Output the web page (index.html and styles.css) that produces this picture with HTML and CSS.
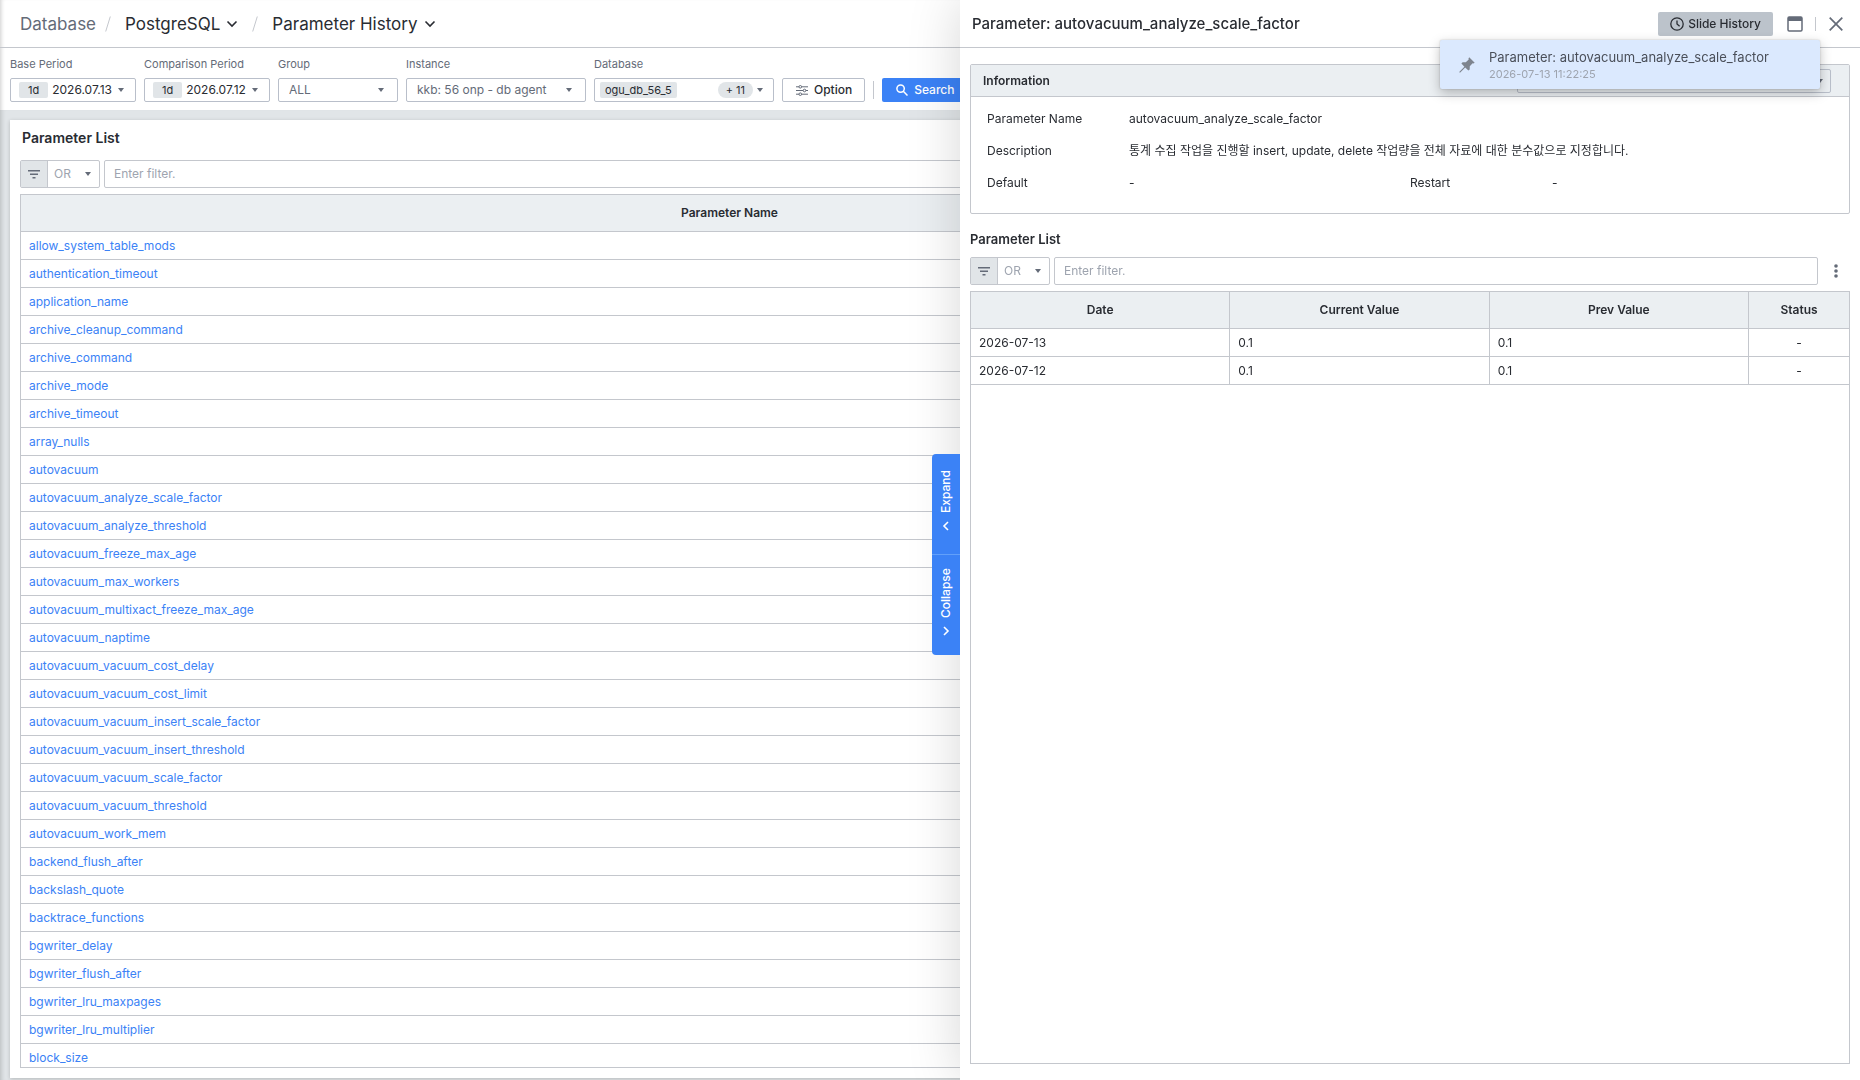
FILE: index.html
```html
<!DOCTYPE html>
<html lang="ko">
<head>
    <meta charset="UTF-8">
    <meta name="viewport" content="width=device-width, initial-scale=1.0">
    <title>Parameter History</title>
    <link rel="stylesheet" href="styles.css">
</head>
<body>
    <svg class="sprite" aria-hidden="true">
        <symbol id="icon-caret" viewBox="0 0 6 4"><path d="M0 0h6L3 4z"/></symbol>
        <symbol id="icon-chevron" viewBox="0 0 12 8"><path d="M1.5 1.5L6 6l4.5-4.5" fill="none" stroke="currentColor" stroke-width="1.6"/></symbol>
        <symbol id="icon-filter" viewBox="0 0 12 9"><path d="M0 0h12v1.4H0zM2 3.5h8v1.4H2zM4.5 7h3v1.4h-3z"/></symbol>
    </svg>

    <main class="page">
        <nav class="breadcrumb" aria-label="Breadcrumb">
            <span class="crumb-root">Database</span>
            <svg class="slash" viewBox="0 0 6 16"><path d="M5.3 0.5L0.7 15.5"/></svg>
            <button class="crumb" type="button">PostgreSQL <svg class="chevron"><use href="#icon-chevron"/></svg></button>
            <svg class="slash" viewBox="0 0 6 16"><path d="M5.3 0.5L0.7 15.5"/></svg>
            <button class="crumb" type="button">Parameter History <svg class="chevron"><use href="#icon-chevron"/></svg></button>
        </nav>

        <form class="toolbar">
            <div class="field field-period">
                <label for="base">Base Period</label>
                <button class="control period" id="base" type="button"><span class="tag">1d</span>2026.07.13<svg class="caret"><use href="#icon-caret"/></svg></button>
            </div>
            <div class="field field-period">
                <label for="comparison">Comparison Period</label>
                <button class="control period" id="comparison" type="button"><span class="tag">1d</span>2026.07.12<svg class="caret"><use href="#icon-caret"/></svg></button>
            </div>
            <div class="field field-group">
                <label for="group">Group</label>
                <div class="select">
                    <select class="control" id="group"><option>ALL</option></select>
                    <svg class="caret"><use href="#icon-caret"/></svg>
                </div>
            </div>
            <div class="field field-wide">
                <label for="instance">Instance</label>
                <div class="select">
                    <select class="control" id="instance"><option>kkb: 56 onp - db agent</option></select>
                    <svg class="caret"><use href="#icon-caret"/></svg>
                </div>
            </div>
            <div class="field field-wide">
                <label for="database">Database</label>
                <button class="control multi" id="database" type="button"><span class="tag">ogu_db_56_5</span><span class="count">+ 11</span><svg class="caret"><use href="#icon-caret"/></svg></button>
            </div>
            <button class="control option" type="button">
                <svg class="option-icon" viewBox="0 0 12 11"><path d="M0 1.8h3M5.6 1.8H12M0 5.5h7.2M9.8 5.5H12M0 9.2h3M5.6 9.2H12"/><circle cx="4.3" cy="1.8" r="1.3"/><circle cx="8.5" cy="5.5" r="1.3"/><circle cx="4.3" cy="9.2" r="1.3"/></svg>
                Option
            </button>
            <span class="divider"></span>
            <button class="search" type="submit">
                <svg class="search-icon" viewBox="0 0 12 12"><circle cx="4.6" cy="4.6" r="3.7"/><path d="M7.3 7.3l4.2 4.2"/></svg>
                Search
            </button>
        </form>

        <div class="content">
            <section class="panel">
                <h2>Parameter List</h2>
                <div class="filter">
                    <div class="filter-mode">
                        <span class="filter-icon"><svg><use href="#icon-filter"/></svg></span>
                        <div class="select">
                            <select aria-label="Filter operator"><option>OR</option></select>
                            <svg class="caret"><use href="#icon-caret"/></svg>
                        </div>
                    </div>
                    <input class="filter-input" type="text" placeholder="Enter filter." aria-label="Filter parameters">
                </div>
                <div class="table-wrap">
                    <table>
                        <colgroup><col class="col-name"><col></colgroup>
                        <thead>
                            <tr><th>Parameter Name</th><th></th></tr>
                        </thead>
                        <tbody>
                            <tr><td><a href="#">allow_system_table_mods</a></td><td></td></tr>
                            <tr><td><a href="#">authentication_timeout</a></td><td></td></tr>
                            <tr><td><a href="#">application_name</a></td><td></td></tr>
                            <tr><td><a href="#">archive_cleanup_command</a></td><td></td></tr>
                            <tr><td><a href="#">archive_command</a></td><td></td></tr>
                            <tr><td><a href="#">archive_mode</a></td><td></td></tr>
                            <tr><td><a href="#">archive_timeout</a></td><td></td></tr>
                            <tr><td><a href="#">array_nulls</a></td><td></td></tr>
                            <tr><td><a href="#">autovacuum</a></td><td></td></tr>
                            <tr><td><a href="#">autovacuum_analyze_scale_factor</a></td><td></td></tr>
                            <tr><td><a href="#">autovacuum_analyze_threshold</a></td><td></td></tr>
                            <tr><td><a href="#">autovacuum_freeze_max_age</a></td><td></td></tr>
                            <tr><td><a href="#">autovacuum_max_workers</a></td><td></td></tr>
                            <tr><td><a href="#">autovacuum_multixact_freeze_max_age</a></td><td></td></tr>
                            <tr><td><a href="#">autovacuum_naptime</a></td><td></td></tr>
                            <tr><td><a href="#">autovacuum_vacuum_cost_delay</a></td><td></td></tr>
                            <tr><td><a href="#">autovacuum_vacuum_cost_limit</a></td><td></td></tr>
                            <tr><td><a href="#">autovacuum_vacuum_insert_scale_factor</a></td><td></td></tr>
                            <tr><td><a href="#">autovacuum_vacuum_insert_threshold</a></td><td></td></tr>
                            <tr><td><a href="#">autovacuum_vacuum_scale_factor</a></td><td></td></tr>
                            <tr><td><a href="#">autovacuum_vacuum_threshold</a></td><td></td></tr>
                            <tr><td><a href="#">autovacuum_work_mem</a></td><td></td></tr>
                            <tr><td><a href="#">backend_flush_after</a></td><td></td></tr>
                            <tr><td><a href="#">backslash_quote</a></td><td></td></tr>
                            <tr><td><a href="#">backtrace_functions</a></td><td></td></tr>
                            <tr><td><a href="#">bgwriter_delay</a></td><td></td></tr>
                            <tr><td><a href="#">bgwriter_flush_after</a></td><td></td></tr>
                            <tr><td><a href="#">bgwriter_lru_maxpages</a></td><td></td></tr>
                            <tr><td><a href="#">bgwriter_lru_multiplier</a></td><td></td></tr>
                            <tr><td><a href="#">block_size</a></td><td></td></tr>
                        </tbody>
                    </table>
                </div>
            </section>
        </div>
    </main>

    <aside class="drawer">
        <div class="drawer-tabs">
            <button type="button"><svg viewBox="0 0 8 10"><path d="M2 1l4 4-4 4"/></svg>Expand</button>
            <button type="button"><svg viewBox="0 0 8 10"><path d="M6 1L2 5l4 4"/></svg>Collapse</button>
        </div>

        <header class="drawer-header">
            <h1>Parameter: autovacuum_analyze_scale_factor</h1>
            <button class="history" type="button">
                <svg class="clock" viewBox="0 0 14 14"><circle cx="7" cy="7" r="6.2"/><path d="M7 3.5V7l2.6 2.2"/></svg>
                Slide History
            </button>
            <button class="icon-button" type="button" aria-label="Open in window">
                <svg class="window-icon" viewBox="0 0 16 16"><rect x="1" y="1" width="14" height="14" rx="1.2" fill="none" stroke="currentColor" stroke-width="1.5"/><path d="M1 1h14v4H1z"/></svg>
            </button>
            <span class="divider divider-small"></span>
            <button class="icon-button" type="button" aria-label="Close">
                <svg class="close-icon" viewBox="0 0 14 14"><path d="M0.7 0.7l12.6 12.6M13.3 0.7L0.7 13.3" stroke="currentColor" stroke-width="1.7"/></svg>
            </button>
            <div class="popover">
                <svg class="pin" viewBox="0 0 16 16"><path d="M10.2 0.3L15.7 5.8 14.3 6.5 13.6 6.2 10.8 9.2 10.7 12.4 9.4 13.6 6.2 10.5 1 15.8 0.2 15 5.4 9.7 2.4 6.6 3.6 5.3 6.8 5.2 9.7 2.4 9.5 1.6z"/></svg>
                <div>
                    <div class="popover-title">Parameter: autovacuum_analyze_scale_factor</div>
                    <div class="popover-time">2026-07-13 11:22:25</div>
                </div>
            </div>
        </header>

        <div class="drawer-body">
            <section class="info">
                <div class="info-head">
                    <h3>Information</h3>
                    <div class="select">
                        <select class="control" aria-label="Compared item"><option></option></select>
                        <svg class="caret"><use href="#icon-caret"/></svg>
                    </div>
                </div>
                <dl class="info-list">
                    <div class="info-row full"><dt>Parameter Name</dt><dd>autovacuum_analyze_scale_factor</dd></div>
                    <div class="info-row full"><dt>Description</dt><dd>통계 수집 작업을 진행할 insert, update, delete 작업량을 전체 자료에 대한 분수값으로 지정합니다.</dd></div>
                    <div class="info-row"><dt>Default</dt><dd>-</dd></div>
                    <div class="info-row"><dt>Restart</dt><dd>-</dd></div>
                </dl>
            </section>

            <h3>Parameter List</h3>
            <div class="filter">
                <div class="filter-mode">
                    <span class="filter-icon"><svg><use href="#icon-filter"/></svg></span>
                    <div class="select">
                        <select aria-label="Filter operator"><option>OR</option></select>
                        <svg class="caret"><use href="#icon-caret"/></svg>
                    </div>
                </div>
                <input class="filter-input" type="text" placeholder="Enter filter." aria-label="Filter history">
                <button class="more" type="button" aria-label="More">
                    <svg viewBox="0 0 4 14"><circle cx="2" cy="2" r="1.8"/><circle cx="2" cy="7" r="1.8"/><circle cx="2" cy="12" r="1.8"/></svg>
                </button>
            </div>
            <div class="table-wrap">
                <table>
                    <colgroup><col><col><col><col class="col-status"></colgroup>
                    <thead>
                        <tr><th>Date</th><th>Current Value</th><th>Prev Value</th><th>Status</th></tr>
                    </thead>
                    <tbody>
                        <tr><td>2026-07-13</td><td>0.1</td><td>0.1</td><td class="center">-</td></tr>
                        <tr><td>2026-07-12</td><td>0.1</td><td>0.1</td><td class="center">-</td></tr>
                    </tbody>
                </table>
            </div>
        </div>
    </aside>
</body>
</html>
```
FILE: styles.css
```css
:root {
    --text: #292c32;
    --text-sub: #646b78;
    --text-muted: #9ea4af;
    --border: #c4c7cd;
    --control-border: #b9bfca;
    --head: #ebeff2;
    --chip: #e1e5e8;
    --blue: #3b82f6;
}

* {
    box-sizing: border-box;
    margin: 0;
    padding: 0;
}

body {
    height: 100vh;
    overflow: hidden;
    color: var(--text);
    background: #fff;
    font: 12px/16px Inter, "Noto Sans CJK KR", sans-serif;
}

button, input, select {
    font: inherit;
    color: inherit;
    border: 0;
    background: none;
}

button {
    display: flex;
    align-items: center;
    white-space: nowrap;
    cursor: pointer;
}

svg {
    flex: none;
    fill: currentColor;
}

a {
    color: var(--blue);
    text-decoration: none;
}

.sprite {
    display: none;
}

.page {
    display: flex;
    flex-direction: column;
    height: 100%;
    box-shadow: inset 4px 0 4px -3px rgba(0, 0, 0, 0.2);
}

/* breadcrumb */
.breadcrumb {
    display: flex;
    align-items: center;
    height: 48px;
    padding-left: 20px;
    border-bottom: 1px solid var(--border);
    font-size: 17px;
    line-height: 24px;
}

.crumb-root {
    color: var(--text-sub);
}

.crumb {
    gap: 6px;
}

.slash {
    width: 6px;
    height: 16px;
    margin: 0 14px 0 9px;
    fill: none;
    stroke: var(--border);
}

.crumb + .slash {
    margin-left: 14px;
}

.chevron {
    width: 12px;
    height: 8px;
}

/* toolbar */
.toolbar {
    display: flex;
    align-items: flex-end;
    gap: 8px;
    height: 62px;
    padding: 0 10px 8px;
}

.field label {
    display: block;
    margin-bottom: 6px;
    font-size: 11px;
    color: var(--text-sub);
}

.field-period {
    width: 126px;
}

.field-group {
    width: 120px;
}

.field-wide {
    width: 180px;
}

.control {
    height: 24px;
    border: 1px solid var(--control-border);
    border-radius: 2px;
    background: #fff;
}

.select {
    position: relative;
    color: var(--text-sub);
}

.select select {
    width: 100%;
    padding: 0 10px;
    appearance: none;
}

.select .caret {
    position: absolute;
    top: 50%;
    right: 14px;
    margin-top: -2px;
    pointer-events: none;
}

.caret {
    width: 6px;
    height: 4px;
    color: var(--text-sub);
}

.tag {
    padding: 0 9px;
    border-radius: 2px;
    background: var(--chip);
    font-size: 11px;
}

.period {
    width: 100%;
    padding: 0 11px 0 8px;
}

.period .tag {
    margin-right: 4px;
}

.period .caret {
    margin-left: auto;
}

.multi {
    width: 100%;
    padding: 0 10px 0 5px;
}

.multi .tag {
    padding: 0 5px;
}

.count {
    margin: 0 4px 0 auto;
    padding: 0 8px;
    border-radius: 8px;
    background: var(--chip);
    font-size: 11px;
}

.option {
    gap: 6px;
    padding: 0 12px 0 13px;
    font-weight: 500;
}

.option-icon {
    width: 12px;
    height: 11px;
    fill: none;
    stroke: var(--text-sub);
}

.divider {
    width: 1px;
    height: 18px;
    margin-bottom: 3px;
    background: var(--border);
}

.search {
    gap: 6px;
    height: 24px;
    padding: 0 14px;
    border-radius: 2px;
    background: var(--blue);
    color: #fff;
    font-weight: 500;
}

.search-icon {
    width: 12px;
    height: 12px;
    fill: none;
    stroke: #fff;
    stroke-width: 1.5;
}

/* parameter panel */
.content {
    flex: 1;
    min-height: 0;
    padding: 10px 10px 2px;
    background: var(--chip);
    box-shadow: inset 5px 0 5px -4px rgba(0, 0, 0, 0.2);
}

.panel {
    display: flex;
    flex-direction: column;
    height: 100%;
    padding: 8px 10px 10px;
    background: #fff;
    box-shadow: 0 1px 4px rgba(0, 0, 0, 0.2);
}

.panel h2 {
    margin-bottom: 12px;
    padding-left: 2px;
    font-size: 14px;
    line-height: 20px;
    font-weight: 600;
}

.filter {
    display: flex;
    gap: 4px;
    height: 28px;
    margin-bottom: 6px;
}

.filter-mode {
    display: flex;
    width: 80px;
    border: 1px solid var(--border);
    border-radius: 2px;
}

.filter-icon {
    display: flex;
    align-items: center;
    justify-content: center;
    width: 27px;
    border-right: 1px solid var(--border);
    background: var(--chip);
    color: var(--text-sub);
}

.filter-icon svg {
    width: 12px;
    height: 9px;
}

.filter-mode .select {
    flex: 1;
}

.filter-mode select {
    height: 100%;
    padding: 0 6px;
    color: var(--text-muted);
}

.filter-mode .caret {
    right: 8px;
}

.filter-input {
    flex: 1;
    padding: 0 9px;
    border: 1px solid var(--border);
    border-radius: 2px;
}

.filter-input::placeholder {
    color: var(--text-muted);
}

.table-wrap {
    flex: 1;
    min-height: 0;
    overflow: hidden;
    border: 1px solid var(--border);
}

table {
    width: 100%;
    table-layout: fixed;
    border-collapse: separate;
    border-spacing: 0;
}

th, td {
    height: 28px;
    padding: 0 8px;
    border-right: 1px solid var(--border);
    border-bottom: 1px solid var(--border);
    text-align: left;
}

th {
    height: 37px;
    background: var(--head);
    font-weight: 600;
    text-align: center;
}

th:last-child, td:last-child {
    border-right: 0;
}

.col-name {
    width: 78%;
}

.col-status {
    width: 100px;
}

td.center {
    text-align: center;
}

/* slide drawer */
.drawer {
    position: fixed;
    top: 0;
    right: 0;
    bottom: 0;
    display: flex;
    flex-direction: column;
    width: 900px;
    background: #fff;
    box-shadow: 0 0 50px rgba(0, 0, 0, 0.16);
}

.drawer-tabs {
    position: absolute;
    top: 50%;
    right: 100%;
    margin-top: -86px;
    overflow: hidden;
    border-radius: 4px 0 0 4px;
}

.drawer-tabs button {
    justify-content: center;
    gap: 8px;
    width: 28px;
    height: 100px;
    padding-top: 6px;
    background: var(--blue);
    color: #fff;
    font-weight: 500;
    writing-mode: vertical-rl;
    transform: rotate(180deg);
}

.drawer-tabs button + button {
    height: 101px;
    border-bottom: 1px solid #62a0fa;
}

.drawer-tabs svg {
    width: 8px;
    height: 10px;
    fill: none;
    stroke: #fff;
    stroke-width: 1.6;
}

.drawer-header {
    position: relative;
    display: flex;
    align-items: center;
    height: 48px;
    padding: 0 17px 0 12px;
    border-bottom: 1px solid var(--border);
}

.drawer-header h1 {
    flex: 1;
    font-size: 15px;
    line-height: 20px;
    font-weight: 500;
}

.history {
    gap: 4px;
    height: 24px;
    margin-right: 14px;
    padding: 0 12px;
    border-radius: 2px;
    background: #bcc3cb;
    font-weight: 500;
}

.clock {
    width: 14px;
    height: 14px;
    fill: none;
    stroke: currentColor;
    stroke-width: 1.3;
}

.icon-button {
    color: var(--text-sub);
}

.window-icon {
    width: 16px;
    height: 16px;
}

.close-icon {
    width: 14px;
    height: 14px;
}

.divider-small {
    height: 14px;
    margin: 0 13px 0 12px;
}

.popover {
    position: absolute;
    top: 40px;
    right: 40px;
    z-index: 1;
    display: flex;
    align-items: center;
    gap: 14px;
    width: 380px;
    height: 49px;
    padding-left: 19px;
    border-radius: 2px;
    background: #dbe9fe;
    box-shadow: 0 4px 12px rgba(0, 0, 0, 0.25), 0 0 2px rgba(0, 0, 0, 0.2);
}

.pin {
    width: 16px;
    height: 16px;
    color: #7e848e;
}

.popover-title {
    font-size: 13px;
    line-height: 18px;
    color: #4a4f59;
}

.popover-time {
    font-size: 11px;
    color: var(--text-muted);
}

.drawer-body {
    display: flex;
    flex: 1;
    flex-direction: column;
    min-height: 0;
    padding: 16px 10px;
}

.drawer-body h3 {
    margin: 17px 0 10px;
    font-size: 13px;
    font-weight: 600;
}

.info {
    border: 1px solid var(--border);
    border-radius: 2px;
}

.info-head {
    display: flex;
    align-items: center;
    justify-content: space-between;
    height: 32px;
    padding: 0 18px 0 12px;
    border-bottom: 1px solid var(--border);
    background: var(--head);
}

.info-head h3 {
    margin: 0;
    font-size: 12px;
}

.info-head .select {
    width: 314px;
}

.info-head .control {
    display: block;
    background: var(--head);
}

.info-head .caret {
    right: 8px;
}

.info-list {
    display: grid;
    grid-template-columns: 1fr 1fr;
    padding: 6px 16px 14px;
}

.info-row {
    display: flex;
    align-items: center;
    height: 32px;
}

.info-row.full {
    grid-column: span 2;
}

.info-row dt {
    width: 142px;
}

.more {
    justify-content: center;
    width: 28px;
    color: var(--text-sub);
}

.more svg {
    width: 4px;
    height: 14px;
}
```
